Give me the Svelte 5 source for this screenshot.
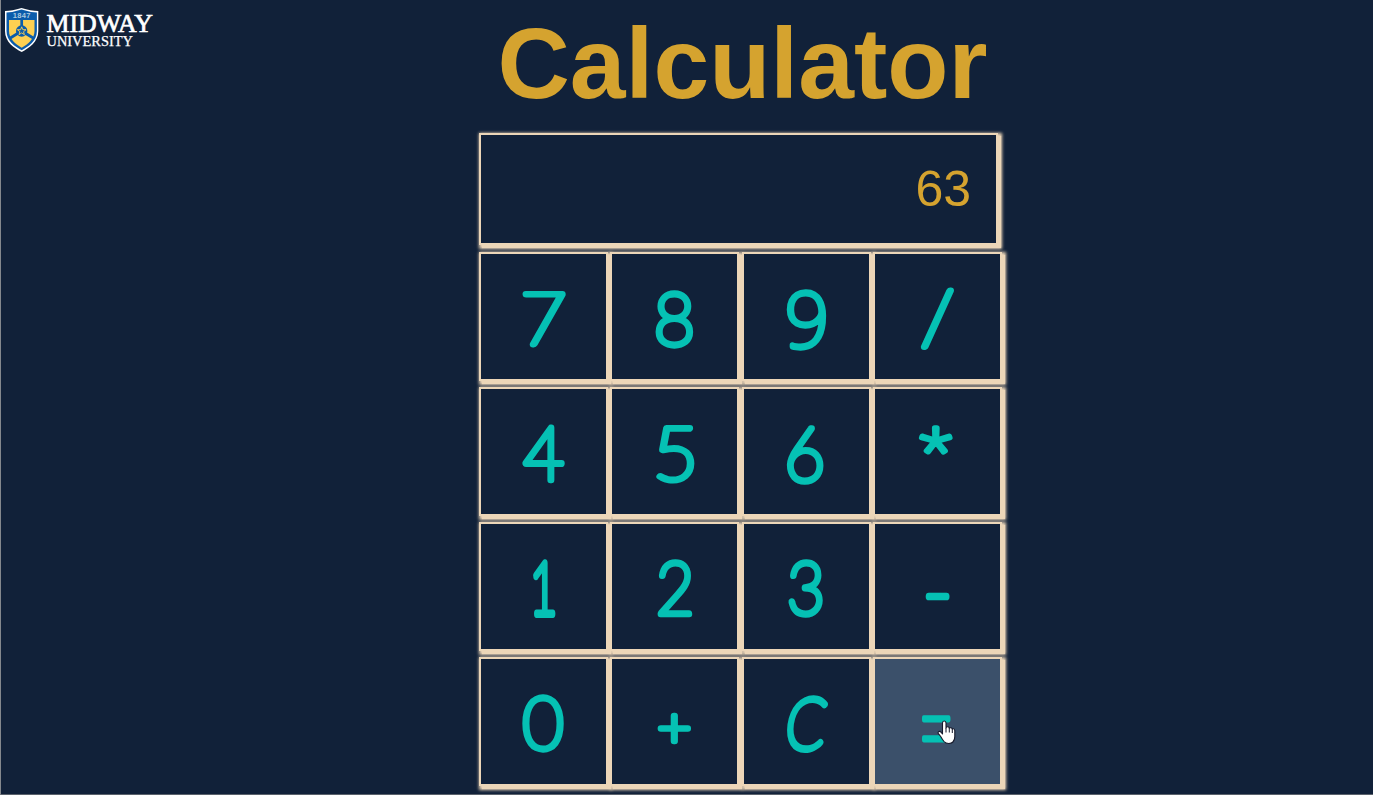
<script>
  // ink: glyph extents at 100px (left, right, top, bottom from the baseline)
  // box: area the stroked glyph fills inside its 125px key
  const keys = [
    { t: '7', ink: [7, 52.5, -70.5, 0], box: [41.7, 84.3, 37, 94] },
    { t: '8', ink: [7, 51, -71, 1], box: [43.7, 81.3, 36, 94.6] },
    { t: '9', f: 'Noto Sans', ink: [5.5, 50, -72.5, 1], box: [42.7, 82, 35.7, 96.3], w: 5.3 },
    { t: '/', ink: [4, 38, -73, 4], box: [45.7, 79, 32.7, 96.3] },
    { t: '4', ink: [2.5, 54, -71, 0], box: [41, 83.3, 36, 94.3] },
    { t: '5', ink: [8, 49, -71, 1], box: [44, 82.3, 35.6, 94.6] },
    { t: '6', ink: [8, 52, -71, 1], box: [42.7, 80, 35.7, 96] },
    { t: '*', f: 'Noto Sans', ink: [6, 49, -76, -35], box: [44, 78, 35.4, 65.5], w: 5.6 },
    { t: '1', ink: [11, 49, -71, 0], box: [51, 75, 36, 93] },
    { t: '2', ink: [6, 51, -71, 0], box: [45, 80.7, 36, 93.5] },
    { t: '3', ink: [6, 51, -71, 1], box: [44, 79.3, 36, 94.3] },
    { t: '-', ink: [7, 30, -30.5, -28.5], box: [50.3, 75, 67.7, 75.9], w: 6.5 },
    { t: '0', ink: [4.5, 53.5, -71, 1], box: [41.5, 82.5, 36, 94.3] },
    { t: '+', ink: [6.5, 52.5, -57.5, -9.5], box: [46, 79, 53.7, 85.3] },
    { t: 'C', ink: [6, 65, -71, 1], box: [42.8, 82.8, 36.9, 94.2], k: -0.14 },
    { t: '=', f: 'Inter', ink: [14, 49, -39, -17], box: [46, 76, 56.4, 83.3], w: 4.2, hover: true }
  ];

  function place({ ink, box, w = 6.3, k = 0 }) {
    const sx = (box[1] - box[0] - w) / (ink[1] - ink[0]);
    const sy = (box[3] - box[2] - w) / (ink[3] - ink[2]);
    const cx = (ink[0] + ink[1]) / 2;
    const cy = (ink[2] + ink[3]) / 2;
    const tx = (box[0] + box[1]) / 2 - sx * cx - k * sy * cy;
    const ty = (box[2] + box[3]) / 2 - sy * cy;
    return {
      transform: `matrix(${sx} 0 ${k * sy} ${sy} ${tx} ${ty})`,
      stroke: w / Math.sqrt(sx * sy)
    };
  }
</script>

<div class="page">
  <svg class="logo" width="160" height="56" viewBox="0 0 160 56">
    <path d="M5 11Q12 11 21.500 8Q31 11 38.300 11V31C38.300 42 29 48 21.700 52C14 48 5 42 5 31Z" fill="#fff" />
    <path d="M6.500 12.500Q14 12.200 21.600 9.600Q29 12.200 36.900 12.500V31C36.900 41 28.500 46.500 21.700 50.300C15 46.500 6.500 41 6.500 31Z" fill="#0b5cab" />
    <path d="M9 20H34.500V31C34.500 39 28 44 21.700 47.800C15.500 44 9 39 9 31Z" fill="#fdd052" />
    <path d="M21.700 19V31L9.500 38.500M21.700 31L34 38.500" fill="none" stroke="#0b5cab" stroke-width="2.700" />
    <circle cx="21.700" cy="31" r="5.700" fill="#0b5cab" />
    <path d="M21.700 26.800L22.800 29.700H26L23.500 31.700L24.400 34.700L21.700 32.900L19 34.700L19.900 31.700L17.400 29.700H20.600Z" fill="#0b5cab" stroke="#fdd052" stroke-width=".9" />
    <text class="year" x="12.800" y="18.200" textLength="17.500">1847</text>
    <text class="name" x="46.500" y="31.500" textLength="106.500" lengthAdjust="spacingAndGlyphs">MIDWAY</text>
    <text class="sub" x="46.500" y="45.700" textLength="86.500" lengthAdjust="spacingAndGlyphs">UNIVERSITY</text>
  </svg>

  <main>
    <h1>Calculator</h1>
    <div class="display">63</div>
    <div class="keys">
      {#each keys as key}
        {@const p = place(key)}
        <button class:hover={key.hover}>
          <svg width="125" height="125" viewBox="0 0 125 125">
            <text transform={p.transform} stroke-width={p.stroke} font-family={`${key.f ?? 'Lato'}, sans-serif`}>{key.t}</text>
          </svg>
          {#if key.hover}
            <svg class="pointer" width="20" height="26" viewBox="0 0 20 26">
              <path d="M5.500 14V3Q5.500 1 7.200 1T9 3V8Q9.200 6.800 10.700 6.800T12.300 8.500Q12.500 7.600 13.800 7.700T15.300 9.400Q15.600 8.700 16.500 8.800T17.800 10.600V16.500Q17.800 20 15.900 22Q14.500 23.500 11.800 23.500Q8.700 23.500 7 21.500Q5 19 3.700 16.500L1.200 13.300Q.7 12 1.800 11.500T4 12.200Z" fill="#fff" stroke="#15182a" stroke-width="1.100" stroke-linejoin="round" />
              <path d="M9 8V12.500M12.300 8.500V12.500M15.300 9.500V13" stroke="#15182a" stroke-width="1" />
            </svg>
          {/if}
        </button>
      {/each}
    </div>
  </main>
</div>

<style>
  :global(body) { margin: 0; background: #112139; overflow: hidden; }
  .page {
    display: flex;
    box-sizing: border-box;
    width: 1373px;
    height: 795px;
    overflow: hidden;
    background: #112139;
    border-left: 1px solid #84888d;
    border-bottom: 1px solid #5b626c;
  }
  .logo { flex: none; width: 160px; margin-left: -1px; }
  .year { font: 700 7.5px 'Liberation Sans', sans-serif; fill: #a9c9df; }
  .name { font: 400 25px 'Liberation Serif', serif; fill: #fff; stroke: #fff; stroke-width: .7; }
  .sub { font: 400 14.5px 'Liberation Serif', serif; fill: #fff; stroke: #fff; stroke-width: .25; }
  main { width: 523px; margin-left: 319px; }
  h1 {
    margin: 6px 0 0 18.500px;
    height: 127px;
    font: 700 100.2px/115px 'Liberation Sans', Arial, sans-serif;
    color: #d5a32f;
    white-space: nowrap;
  }
  .display {
    box-sizing: border-box;
    width: 519px;
    height: 112px;
    padding-right: 25px;
    border: 2px solid #ecd6b8;
    box-shadow: 3px 3px 1px #ecd6b8, 2px 2px 3px 2px #ecd6b8;
    color: #d5a32f;
    font: 50px/109px 'Liberation Sans', Arial, sans-serif;
    text-align: right;
  }
  .keys {
    display: grid;
    grid-template-columns: repeat(4, 129px);
    gap: 6px 2.333px;
    margin-top: 7px;
  }
  button {
    position: relative;
    display: block;
    width: 129px;
    height: 129px;
    padding: 0;
    border: 2px solid #ecd6b8;
    background: #112139;
    box-shadow: 3px 3px 1px #ecd6b8, 2px 2px 3px 2px #ecd6b8;
  }
  button.hover { background: #3b506a; }
  button svg { display: block; overflow: visible; }
  button text {
    font-size: 100px;
    font-weight: 100;
    fill: #05c1b4;
    stroke: #05c1b4;
    stroke-linejoin: round;
  }
  .pointer { position: absolute; left: 62px; top: 61px; }
</style>
